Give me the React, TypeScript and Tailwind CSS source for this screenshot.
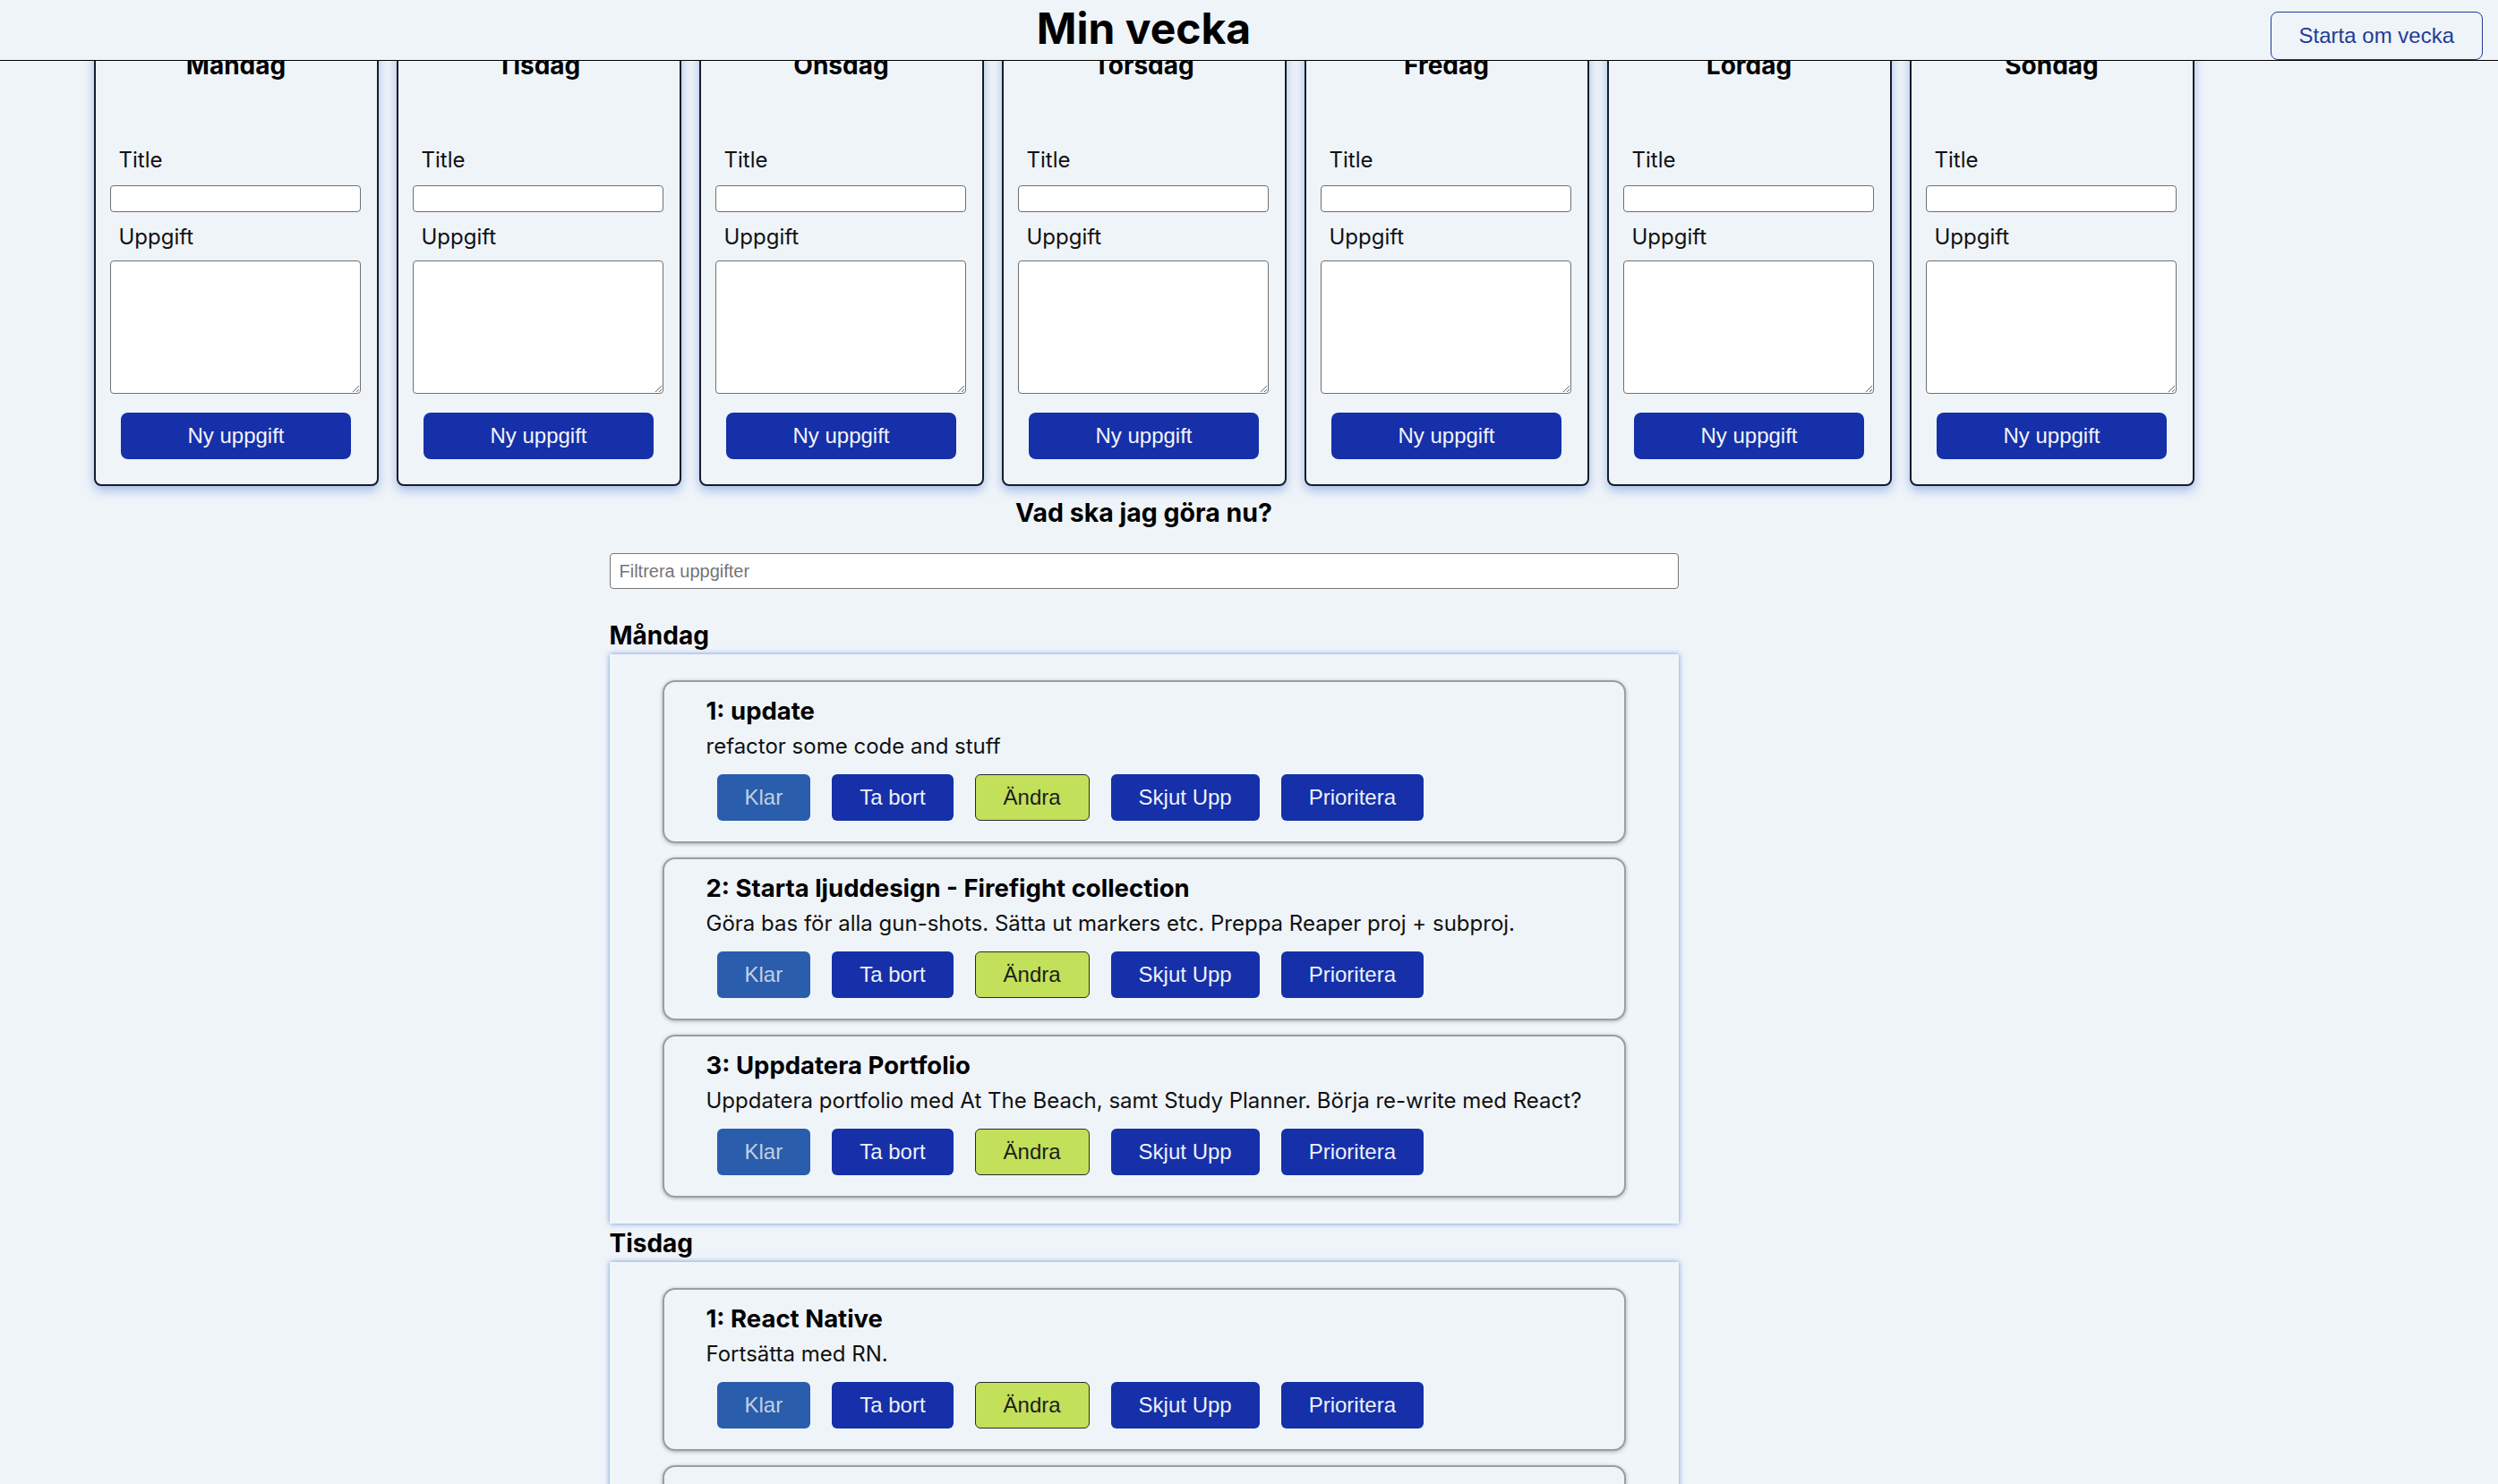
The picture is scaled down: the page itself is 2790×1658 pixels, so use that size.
import React from "react";

type Task = { title: string; text: string };

const days = ["Måndag", "Tisdag", "Onsdag", "Torsdag", "Fredag", "Lördag", "Söndag"];

const schedule: { day: string; tasks: Task[] }[] = [
  {
    day: "Måndag",
    tasks: [
      { title: "update", text: "refactor some code and stuff" },
      {
        title: "Starta ljuddesign - Firefight collection",
        text: "Göra bas för alla gun-shots. Sätta ut markers etc. Preppa Reaper proj + subproj.",
      },
      {
        title: "Uppdatera Portfolio",
        text: "Uppdatera portfolio med At The Beach, samt Study Planner. Börja re-write med React?",
      },
    ],
  },
  {
    day: "Tisdag",
    tasks: [
      { title: "React Native", text: "Fortsätta med RN." },
      { title: "Träna", text: "Gym på kvällen." },
    ],
  },
];

function DayCard({ name }: { name: string }) {
  return (
    <div className="w-[318px] flex flex-col border-2 border-[#161b2b] rounded-[8px] bg-[#eff4f9] pt-[32px] pb-[28px] px-[16px] shadow-[0_5px_12px_rgba(70,120,210,0.45)]">
      <h2 className="text-center text-[28px] leading-[34px] font-bold text-black">{name}</h2>
      <label className="mt-[75px] ml-[10px] text-[24px] leading-[28px] text-[#111]">Title</label>
      <input
        type="text"
        className="mt-[14px] h-[30px] w-[280px] bg-white border border-[#6f6f6f] rounded-[4px]"
      />
      <label className="mt-[14px] ml-[10px] text-[24px] leading-[28px] text-[#111]">Uppgift</label>
      <textarea className="mt-[12px] h-[149px] w-[280px] bg-white border border-[#6f6f6f] rounded-[4px] resize" />
      <button className="mt-[21px] mx-auto h-[52px] w-[257px] rounded-[8px] bg-[#1530a9] text-[#f2f4fb] font-['Liberation_Sans',Arial,sans-serif] text-[24px]">
        Ny uppgift
      </button>
    </div>
  );
}

function TaskCard({ index, task }: { index: number; task: Task }) {
  const btn =
    "mx-[12px] h-[52px] px-[31px] rounded-[6px] font-['Liberation_Sans',Arial,sans-serif] text-[24px]";
  return (
    <div className="border-2 border-[#9a9ea5] rounded-[14px] bg-[#eff4f9] pt-[16px] pb-[23px] pl-[47px] shadow-[0_1px_4px_rgba(0,0,0,0.3)]">
      <h4 className="text-[27.5px] leading-[33px] font-bold text-black">
        {index}: {task.title}
      </h4>
      <p className="mt-[8px] text-[24px] leading-[29px] text-[#111]">{task.text}</p>
      <div className="mt-[17px] flex">
        <button className={`${btn} bg-[#2a5dab] text-[#c3cfe2]`}>Klar</button>
        <button className={`${btn} bg-[#1530a9] text-[#eef1fa]`}>Ta bort</button>
        <button className={`${btn} bg-[#c2e05a] text-[#1d1d1d] border border-[#2a2a2a]`}>Ändra</button>
        <button className={`${btn} bg-[#1530a9] text-[#eef1fa]`}>Skjut Upp</button>
        <button className={`${btn} bg-[#1530a9] text-[#eef1fa]`}>Prioritera</button>
      </div>
    </div>
  );
}

export default function App() {
  return (
    <div className="min-h-screen w-full bg-[#eff4f9] font-['Inter',sans-serif] text-black">
      {/* fixed top bar */}
      <header className="fixed top-0 left-0 right-0 z-10 h-[68px] bg-[#eff4f9] border-b-[1.5px] border-black">
        <div className="w-[2555px] flex justify-center pt-[3px]">
          <h1 className="text-[48px] leading-[58px] font-bold">Min vecka</h1>
        </div>
        <button className="absolute right-[17px] top-[13px] h-[54px] px-[31px] rounded-[8px] border-[1.5px] border-[#1f3b98] text-[#1f3b98] font-['Liberation_Sans',Arial,sans-serif] text-[24px]">
          Starta om vecka
        </button>
      </header>

      <div className="w-[2555px] flex flex-col items-center pt-[22px] pb-[40px]">
        <div className="flex gap-[20px]">
          {days.map((d) => (
            <DayCard key={d} name={d} />
          ))}
        </div>

        <h2 className="mt-[13px] text-[28.5px] leading-[34px] font-bold">Vad ska jag göra nu?</h2>
        <input
          type="text"
          placeholder="Filtrera uppgifter"
          className="mt-[28px] h-[40px] w-[1194px] bg-white border border-[#767676] rounded-[4px] pl-[10px] font-['Liberation_Sans',Arial,sans-serif] text-[20px] placeholder:text-[#757575]"
        />

        <div className="w-[1194px] mt-[35px] flex flex-col">
          {schedule.map((s, i) => (
            <section key={s.day} className={i > 0 ? "mt-[5px]" : ""}>
              <h3 className="text-[28px] leading-[34px] font-bold">{s.day}</h3>
              <div className="mt-[4px] bg-[#f0f5fa] shadow-[0_0_6px_rgba(60,110,210,0.7)] pt-[29px] pb-[29px] px-[59px] flex flex-col gap-[16px]">
                {s.tasks.map((t, j) => (
                  <TaskCard key={j} index={j + 1} task={t} />
                ))}
              </div>
            </section>
          ))}
        </div>
      </div>
    </div>
  );
}
